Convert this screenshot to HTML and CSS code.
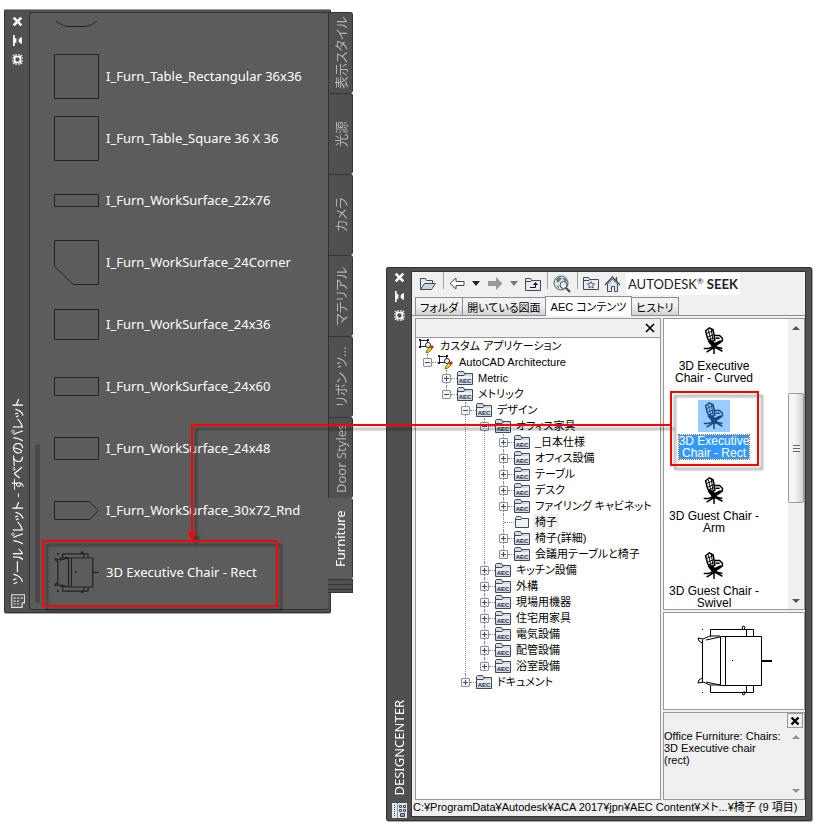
FILE: index.html
```html
<!DOCTYPE html>
<html lang="ja">
<head>
    <meta charset="UTF-8">
    <meta name="viewport" content="width=device-width, initial-scale=1.0">
    <title>DesignCenter</title>
    <link rel="stylesheet" href="styles.css">
</head>
<body>
    <svg class="symbols" aria-hidden="true">
        <symbol id="close" viewBox="0 0 10 10"><path d="M1.5 1.5l7 7M8.5 1.5l-7 7" fill="none" stroke="currentColor" stroke-width="2.4"/></symbol>
        <symbol id="pin" viewBox="0 0 10 10"><path d="M1 0h1.500v3H4v4H2.500v3H1zM9 2v6H8L6 6V4l2-2z" fill="currentColor"/></symbol>
        <symbol id="gear" viewBox="0 0 11 11"><g fill="none" stroke="currentColor"><circle cx="5.500" cy="5.500" r="3" stroke-width="1.600"/><path d="M4 0v3M7 0v3M4 8v3M7 8v3M0 4h3M0 7h3M8 4h3M8 7h3M1 1l2.500 2.500M10 1L7.500 3.500M1 10l2.500-2.500M10 10L7.500 7.500" stroke-width="1.200"/></g></symbol>
        <symbol id="aec" viewBox="0 0 16 14">
            <path d="M.5 13.5V1.5l1-1h5l1 2h8v11z" fill="#d3dae3" stroke="#3f4a59"/>
            <path d="M1 4.5h6l1.500-1.500" fill="none" stroke="#3f4a59"/>
            <path d="M1 5h14v3H1z" fill="#eef1f5"/>
            <text x="8" y="12" text-anchor="middle">AEC</text>
        </symbol>
        <symbol id="folder" viewBox="0 0 16 14">
            <path d="M1.500 12.500v-9l1-2h4l1 2h7v9z" fill="#eef1f5" stroke="#3f4a59"/>
            <path d="M2 4.500h5l1-1" fill="none" stroke="#3f4a59"/>
        </symbol>
        <symbol id="custom" viewBox="0 0 16 16">
            <path d="M1.500 2.500h7v6h-7z" fill="#fff" stroke="#222"/>
            <path d="M0 1h2v2H0zM8 1h2v2H8zM0 8h2v2H0z" fill="#222"/>
            <circle cx="9" cy="7" r="2.500" fill="#fff" stroke="#222"/>
            <path d="M7 15l1-3 3-3 2 2-3 3z" fill="#f0d400" stroke="#554800" stroke-width=".7"/>
            <path d="M11 9l2-2 2 2-2 2z" fill="#d32020"/>
        </symbol>
        <symbol id="chair" viewBox="0 0 24 30">
            <path d="M3 4l4-3 4 2 1 5 1 6-5 3-3-5zM13 9h5l3 3v3l-5 2M14 12h4" fill="none" stroke="currentColor" stroke-width="1.600"/>
            <path d="M6 3l3 13M9 2l2 13M4 7l7-3M5 11l7-3M6 14l7-3" fill="none" stroke="currentColor"/>
            <path d="M5 15l4-1 4 3 6-3 1 3-5 3v3h-5l-1-3z" fill="currentColor"/>
            <path d="M1 23h5l6-2 9 5M13 21l8 2M12 22l-8 5M12 21v8" fill="none" stroke="currentColor" stroke-width="1.600"/>
        </symbol>
        <symbol id="chair-plan" viewBox="0 0 76 72">
            <g fill="none" stroke="currentColor">
                <path d="M14.500 11.500v-7h43v7M50.500 4.500v7M14.500 60.500v7h43v-7M50.500 60.500v7M24.500 11.500h41v49h-41zM29.500 11.500v49M6.500 14.500v43M7 14l7-3h10M10 15l14-3M7 57l7 3h10M10 57l14 3"/>
                <path d="M7 14l-5-1 1 3 3 2M7 57l-5 1 1-3 3-2M46 4l1-3 2 1-1 3M46 67l1 3 2-1-1-3"/>
                <path d="M66 36h10" stroke-width="2"/>
            </g>
            <path d="M6 4h1v1H6zM6 67h1v1H6zM36 35h1v1h-1z" fill="currentColor"/>
        </symbol>
    </svg>

    <div class="workspace">
        <section class="palette" aria-label="ツール パレット">
            <div class="palette-frame">
                <div class="titlebar">
                    <button aria-label="閉じる"><svg><use href="#close"/></svg></button>
                    <button aria-label="自動的に隠す"><svg><use href="#pin"/></svg></button>
                    <button aria-label="プロパティ"><svg><use href="#gear"/></svg></button>
                    <h2>ツール パレット - すべてのパレット</h2>
                    <svg class="title-icon" viewBox="0 0 13 13"><path d="M1.500 1.500h11v7h-2v4h-9z" fill="none" stroke="#ddd"/><path d="M3 4h2v1H3zM6 4h2v1H6zM9 4h2v1H9zM3 6.500h2v1H3zM6 6.500h2v1H6zM3 9h2v1H3zM6 9h2v1H6z" fill="#ddd"/></svg>
                </div>
                <div class="palette-body">
                    <div class="palette-scroll"></div>
                    <ul class="tool-list">
                        <li class="tool-cut"><svg viewBox="0 0 45 32"><path d="M2 8q8 6 13 5.500h15q5 .5 13-5.500"/></svg></li>
                        <li><svg viewBox="0 0 45 45"><path d="M.5.5h44v44H.5z"/></svg>I_Furn_Table_Rectangular 36x36</li>
                        <li><svg viewBox="0 0 45 45"><path d="M.5.5h44v44H.5z"/></svg>I_Furn_Table_Square 36 X 36</li>
                        <li><svg viewBox="0 0 45 45"><path d="M.5 16.500h44v12H.5z"/></svg>I_Furn_WorkSurface_22x76</li>
                        <li><svg viewBox="0 0 45 45"><path d="M.5.5h44v44h-25l-19-18z"/></svg>I_Furn_WorkSurface_24Corner</li>
                        <li><svg viewBox="0 0 45 45"><path d="M.5 7.500h44v30H.5z"/></svg>I_Furn_WorkSurface_24x36</li>
                        <li><svg viewBox="0 0 45 45"><path d="M.5 13.500h44v18H.5z"/></svg>I_Furn_WorkSurface_24x60</li>
                        <li><svg viewBox="0 0 45 45"><path d="M.5 11.500h44v22H.5z"/></svg>I_Furn_WorkSurface_24x48</li>
                        <li><svg viewBox="0 0 45 45"><path d="M.5 13.500h35l9 9-9 9H.5z"/></svg>I_Furn_WorkSurface_30x72_Rnd</li>
                        <li><svg class="plan" viewBox="0 0 45 45"><use href="#chair-plan" width="45" height="45"/></svg>3D Executive Chair - Rect</li>
                    </ul>
                </div>
            </div>
            <nav class="palette-tabs">
                <button>表示スタイル</button>
                <button>光源</button>
                <button>カメラ</button>
                <button>マテリアル</button>
                <button>リボン ツ...</button>
                <button>Door Styles</button>
                <button class="active">Furniture</button>
                <div class="more-tabs"></div>
            </nav>
        </section>

        <section class="design-center" aria-label="DesignCenter">
            <div class="titlebar">
                <button aria-label="閉じる"><svg><use href="#close"/></svg></button>
                <button aria-label="自動的に隠す"><svg><use href="#pin"/></svg></button>
                <button aria-label="プロパティ"><svg><use href="#gear"/></svg></button>
                <h2>DESIGNCENTER</h2>
                <svg class="title-icon" viewBox="0 0 15 15"><path d="M0 0h15v15H0z" fill="#dfe5ec"/><path d="M2.500 2v11" stroke="#3f4a59" stroke-dasharray="1 1"/><path d="M5.500 0v15" stroke="#8b95a3"/><path d="M7.500 2.500h2v2h-2zM11.500 2.500h2v2h-2zM7.500 6.500h2v2h-2zM11.500 6.500h2v2h-2z" fill="none" stroke="#3f4a59"/><path d="M8.500 10.500h4v3h-4z" fill="#8fa0b3" stroke="#3f4a59"/></svg>
            </div>
            <div class="dc-content">
                <div class="toolbar">
                    <button aria-label="ロード"><svg width="18" height="16" viewBox="0 0 18 16"><path d="M1.500 13.500v-11h5l1 2h6v3" fill="#e8ecf0" stroke="#3f4a59"/><path d="M1.500 13.500l4-6h11l-4 6z" fill="#ccd4dd" stroke="#3f4a59"/></svg></button>
                    <span class="separator"></span>
                    <button aria-label="戻る"><svg width="16" height="16" viewBox="0 0 16 16"><path d="M1 7.500l6-5.500v3.500h8v4H7V13z" fill="#fff" stroke="#3f4a59"/></svg></button>
                    <button class="caret" aria-label="戻る履歴"><svg width="8" height="5" viewBox="0 0 8 5"><path d="M0 0h8L4 5z" fill="#222"/></svg></button>
                    <button aria-label="進む"><svg width="16" height="16" viewBox="0 0 16 16"><path d="M15.500 7.500L9 1v4H1v5h8v4z" fill="#999"/></svg></button>
                    <button class="caret" aria-label="進む履歴"><svg width="8" height="5" viewBox="0 0 8 5"><path d="M0 0h8L4 5z" fill="#777"/></svg></button>
                    <button aria-label="上へ"><svg width="16" height="16" viewBox="0 0 16 16"><path d="M.5 14.500v-12h5l1 2h9v10z" fill="#e8ecf0" stroke="#3f4a59"/><path d="M1 5.500h5l1-1" fill="none" stroke="#3f4a59"/><path d="M5 11.500h5.500V8" fill="none" stroke="#111"/><path d="M8 9l2.500-3L13 9z" fill="#111"/></svg></button>
                    <span class="separator"></span>
                    <button aria-label="検索"><svg width="18" height="18" viewBox="0 0 18 18"><circle cx="8" cy="8" r="7" fill="#e6eeee" stroke="#4f5c66"/><path d="M3 4l3-2 3 1-2 3-3 2zM9 3l3 0 2 3-2 1zM3 10l3 1 0 3z" fill="#66807c"/><circle cx="10.500" cy="10" r="3.500" fill="#e9f3fb" stroke="#3f4a59"/><path d="M13 13l4 4" stroke="#3f4a59" stroke-width="2.200"/></svg></button>
                    <span class="separator"></span>
                    <button aria-label="お気に入り"><svg width="16" height="16" viewBox="0 0 16 16"><path d="M.5 13.500v-12h5l1 2h9v10z" fill="#e8ecf0" stroke="#3f4a59"/><path d="M1 4.500h5l1-1" fill="none" stroke="#3f4a59"/><path d="M8 5.500l1 2.200 2.500.2-1.900 1.600.6 2.500L8 10.700 5.800 12l.6-2.500-1.900-1.600 2.500-.2z" fill="#fff" stroke="#3f4a59" stroke-width=".9"/></svg></button>
                    <button aria-label="ホーム"><svg width="17" height="16" viewBox="0 0 17 16"><path d="M3.500 15.500V8l5-5 5 5v7.500h-3v-5h-3v5z" fill="#dfe5ec" stroke="#3f4a59"/><path d="M1 9l7.500-8L16 9M12.500 1v4" fill="none" stroke="#3f4a59" stroke-width="1.300"/></svg></button>
                    <a class="seek" href="#">AUTODESK<sup>®</sup> <b>SEEK</b></a>
                </div>
                <div class="dc-tabs">
                    <button>フォルダ</button>
                    <button>開いている図面</button>
                    <button class="active">AEC コンテンツ</button>
                    <button>ヒストリ</button>
                </div>
                <div class="panes">
                    <div class="tree-pane">
                        <div class="pane-header"><button aria-label="閉じる"><svg width="10" height="10"><path d="M1 1l8 8M9 1L1 9" stroke="#000" stroke-width="1.600"/></svg></button></div>
                        <div class="tree">
                            <div class="node"><svg class="custom"><use href="#custom"/></svg><span>カスタム アプリケーション</span></div>
                            <ul>
                                <li><div class="node"><button class="toggle open" aria-label="閉じる"></button><svg class="custom"><use href="#custom"/></svg><span>AutoCAD Architecture</span></div>
                                    <ul>
                                        <li><div class="node"><button class="toggle" aria-label="開く"></button><svg><use href="#aec"/></svg><span>Metric</span></div></li>
                                        <li><div class="node"><button class="toggle open" aria-label="閉じる"></button><svg><use href="#aec"/></svg><span>メトリック</span></div>
                                            <ul>
                                                <li><div class="node"><button class="toggle open" aria-label="閉じる"></button><svg><use href="#aec"/></svg><span>デザイン</span></div>
                                                    <ul>
                                                        <li><div class="node"><button class="toggle open" aria-label="閉じる"></button><svg><use href="#aec"/></svg><span>オフィス家具</span></div>
                                                            <ul>
                                                                <li><div class="node"><button class="toggle" aria-label="開く"></button><svg><use href="#aec"/></svg><span>_日本仕様</span></div></li>
                                                                <li><div class="node"><button class="toggle" aria-label="開く"></button><svg><use href="#aec"/></svg><span>オフィス設備</span></div></li>
                                                                <li><div class="node"><button class="toggle" aria-label="開く"></button><svg><use href="#aec"/></svg><span>テーブル</span></div></li>
                                                                <li><div class="node"><button class="toggle" aria-label="開く"></button><svg><use href="#aec"/></svg><span>デスク</span></div></li>
                                                                <li><div class="node"><button class="toggle" aria-label="開く"></button><svg><use href="#aec"/></svg><span>ファイリング キャビネット</span></div></li>
                                                                <li><div class="node leaf"><svg><use href="#folder"/></svg><span class="current">椅子</span></div></li>
                                                                <li><div class="node"><button class="toggle" aria-label="開く"></button><svg><use href="#aec"/></svg><span>椅子(詳細)</span></div></li>
                                                                <li><div class="node"><button class="toggle" aria-label="開く"></button><svg><use href="#aec"/></svg><span>会議用テーブルと椅子</span></div></li>
                                                            </ul>
                                                        </li>
                                                        <li><div class="node"><button class="toggle" aria-label="開く"></button><svg><use href="#aec"/></svg><span>キッチン設備</span></div></li>
                                                        <li><div class="node"><button class="toggle" aria-label="開く"></button><svg><use href="#aec"/></svg><span>外構</span></div></li>
                                                        <li><div class="node"><button class="toggle" aria-label="開く"></button><svg><use href="#aec"/></svg><span>現場用機器</span></div></li>
                                                        <li><div class="node"><button class="toggle" aria-label="開く"></button><svg><use href="#aec"/></svg><span>住宅用家具</span></div></li>
                                                        <li><div class="node"><button class="toggle" aria-label="開く"></button><svg><use href="#aec"/></svg><span>電気設備</span></div></li>
                                                        <li><div class="node"><button class="toggle" aria-label="開く"></button><svg><use href="#aec"/></svg><span>配管設備</span></div></li>
                                                        <li><div class="node"><button class="toggle" aria-label="開く"></button><svg><use href="#aec"/></svg><span>浴室設備</span></div></li>
                                                    </ul>
                                                </li>
                                                <li><div class="node"><button class="toggle" aria-label="開く"></button><svg><use href="#aec"/></svg><span>ドキュメント</span></div></li>
                                            </ul>
                                        </li>
                                    </ul>
                                </li>
                            </ul>
                        </div>
                    </div>
                    <div class="side-panes">
                        <div class="content-list">
                            <ul>
                                <li><svg><use href="#chair"/></svg><span>3D Executive<br>Chair - Curved</span></li>
                                <li class="selected"><svg><use href="#chair"/></svg><span>3D Executive<br>Chair - Rect</span></li>
                                <li><svg><use href="#chair"/></svg><span>3D Guest Chair -<br>Arm</span></li>
                                <li><svg><use href="#chair"/></svg><span>3D Guest Chair -<br>Swivel</span></li>
                            </ul>
                            <div class="scrollbar">
                                <button class="up" aria-label="上へスクロール"></button>
                                <div class="thumb"></div>
                                <button class="down" aria-label="下へスクロール"></button>
                            </div>
                        </div>
                        <div class="preview"><svg width="76" height="72"><use href="#chair-plan"/></svg></div>
                        <div class="description">
                            <button class="close-description" aria-label="閉じる"><svg width="10" height="10"><use href="#close"/></svg></button>
                            <div class="description-body">
                                <p>Office Furniture: Chairs:<br>3D Executive chair<br>(rect)</p>
                                <div class="scrollbar">
                                    <button class="up" aria-label="上へスクロール"></button>
                                    <button class="down" aria-label="下へスクロール"></button>
                                </div>
                            </div>
                        </div>
                    </div>
                </div>
                <div class="status">C:¥ProgramData¥Autodesk¥ACA 2017¥jpn¥AEC Content¥メト...¥椅子 (9 項目)</div>
            </div>
        </section>

        <!-- drag path from the content list to the palette -->
        <svg class="callout" width="823" height="833" viewBox="0 0 823 833" aria-hidden="true">
            <path d="M43 541h234v65H43zM671 392h87v73h-87zM670 425H192v110"/>
            <path class="arrow-head" d="M187 531l5 2 5-2-5 10z"/>
        </svg>
    </div>
</body>
</html>
```

FILE: styles.css
```css
body {
    margin: 0;
    background-color: #fff;
    color: #000;
    font-family: "Liberation Sans", "Noto Sans CJK JP", sans-serif;
    font-size: 12px;
    font-feature-settings: "palt";
}

ul {
    list-style: none;
    margin: 0;
    padding: 0;
}

button {
    display: flex;
    align-items: center;
    justify-content: center;
    margin: 0;
    padding: 0;
    border: none;
    background: none;
    color: inherit;
    font: inherit;
    font-feature-settings: inherit;
}

.symbols {
    display: none;
}

#aec text {
    font: bold 6px "Liberation Sans", sans-serif;
    fill: #2c3644;
}

.workspace {
    position: relative;
    display: grid;
    grid-template-columns: minmax(0, 349fr) minmax(0, 426fr);
    gap: 33px;
    align-items: start;
    padding: 9px 11px 11px 4px;
}

/* Shared vertical title bar */
.titlebar {
    display: flex;
    flex-direction: column;
    align-items: center;
    gap: 8px;
    flex: none;
    width: 24px;
    box-sizing: border-box;
    padding: 4px 0 2px;
    color: #fff;
}

.titlebar button svg {
    width: 11px;
    height: 11px;
}

.titlebar h2 {
    margin: auto 0 0;
    font-family: "Noto Sans", "Noto Sans CJK JP", sans-serif;
    font-size: 13px;
    font-weight: normal;
    line-height: 16px;
    white-space: nowrap;
    writing-mode: vertical-rl;
    text-orientation: sideways;
    transform: rotate(180deg);
}

.title-icon {
    width: 15px;
    height: 15px;
}

/* Tool palette */
.palette {
    display: flex;
    align-items: flex-start;
    font-family: "Noto Sans", "Noto Sans CJK JP", sans-serif;
    color: #fff;
}

.palette-frame {
    display: flex;
    flex: 1;
    min-width: 0;
    box-sizing: border-box;
    padding: 2px 2px 2px 0;
    background-color: #505050;
    border: 1px solid #333;
    border-top-color: #999;
    border-radius: 2px;
    box-shadow: 0 1px 0 #aaa;
}

.palette-body {
    display: flex;
    flex: 1;
    align-items: flex-end;
    min-width: 0;
    box-sizing: border-box;
    padding: 0 0 6px 5px;
    background-color: #5c5c5c;
    border: 1px solid #333;
    border-right: none;
    border-radius: 3px;
}

.palette-scroll {
    width: 5px;
    height: 159px;
    background-color: #484848;
    border-radius: 3px;
}

.tool-list {
    flex: 1;
    padding-left: 14px;
}

.tool-list li {
    display: flex;
    align-items: center;
    gap: 7px;
    height: 62px;
    font-size: 13px;
    white-space: nowrap;
}

.tool-list .tool-cut {
    height: 32px;
}

.tool-list svg {
    flex: none;
    width: 45px;
    color: #222;
    fill: none;
    stroke: #222;
}

.tool-list .plan {
    stroke-width: 2;
}

.palette-tabs {
    flex: none;
    width: 25px;
    margin: 3px 0 0 -3px;
}

.palette-tabs button {
    width: 25px;
    height: 81px;
    background-color: #505050;
    border: 1px solid #333;
    border-top-width: 0;
    border-radius: 3px 0 0 3px;
    color: #b4b4b4;
    font-size: 13px;
    line-height: 20px;
    white-space: nowrap;
    writing-mode: vertical-rl;
    text-orientation: sideways;
    transform: rotate(180deg);
}

.palette-tabs .active {
    background-color: #5c5c5c;
    border-width: 0 0 0 1px;
    color: #fff;
}

.more-tabs {
    height: 14px;
    background: repeating-linear-gradient(#333 0 1px, #505050 1px 5px);
    border-right: 1px solid #333;
    border-bottom: 1px solid #333;
    box-sizing: border-box;
}

/* DesignCenter window */
.design-center {
    display: flex;
    margin-top: 258px;
    box-sizing: border-box;
    background-color: #505050;
    border: 1px solid #333;
    border-radius: 2px;
    box-shadow: 1px 1px 0 #aaa;
}

.dc-content {
    flex: 1;
    min-width: 0;
    margin: 3px 5px 3px 0;
    background-color: #f0f0f0;
    border: 1px solid #333;
}

.toolbar {
    display: flex;
    align-items: center;
    gap: 5px;
    height: 23px;
    padding-left: 7px;
}

.toolbar button {
    height: 20px;
}

.separator {
    width: 1px;
    height: 17px;
    margin: 0 0 6px 1px;
    background-color: #a0a0a0;
}

.toolbar .caret {
    width: 12px;
}

.seek {
    padding: 0 2px;
    background-color: #fff;
    color: #222;
    font-family: Lato, sans-serif;
    font-size: 13px;
    line-height: 22px;
    text-decoration: none;
    white-space: nowrap;
}

.seek sup {
    font-size: 8px;
    line-height: 0;
}

.dc-tabs {
    display: flex;
    align-items: flex-end;
    height: 20px;
    padding-left: 3px;
    border-bottom: 1px solid #8c8c94;
}

.dc-tabs button {
    height: 18px;
    padding: 0 4px;
    background: linear-gradient(#f2f2f2 45%, #d2d2d2);
    border: 1px solid #8c8c94;
    border-bottom: none;
    font-size: 11px;
    white-space: nowrap;
}

.dc-tabs button + button {
    margin-left: -1px;
}

.dc-tabs .active {
    height: 20px;
    margin-bottom: -1px;
    padding: 0 5px 1px;
    background: #fff;
}

.panes {
    display: grid;
    grid-template-columns: minmax(0, 1fr) 142px;
    gap: 2px;
    padding: 2px 0 0 3px;
}

.tree-pane {
    background-color: #fff;
    border: 1px solid #999;
}

.pane-header {
    display: flex;
    justify-content: flex-end;
    height: 18px;
    padding-right: 5px;
    background-color: #f0f0f0;
    border-bottom: 1px solid #999;
}

.tree {
    padding-left: 3px;
    font-size: 11px;
}

.tree > ul {
    padding-left: 4px;
}

.tree ul ul {
    padding-left: 19px;
}

.tree li {
    position: relative;
}

.tree li::before {
    content: "";
    position: absolute;
    top: 0;
    bottom: 0;
    left: 4px;
    border-left: 1px dotted #888;
}

.tree li:last-child::before {
    bottom: auto;
    height: 8px;
}

.node {
    display: flex;
    align-items: center;
    height: 16px;
    line-height: 16px;
    white-space: nowrap;
}

.node svg {
    flex: none;
    width: 16px;
    height: 14px;
}

.node .custom {
    height: 16px;
}

.node span {
    margin-left: 3px;
    padding: 0 2px;
}

.node .current {
    background-color: #f0f0f0;
}

.toggle {
    position: relative;
    flex: none;
    width: 9px;
    height: 9px;
    margin-right: 6px;
    background:
        linear-gradient(#2a50a8, #2a50a8) center / 5px 1px no-repeat,
        linear-gradient(#2a50a8, #2a50a8) center / 1px 5px no-repeat,
        #f4f4f4;
    border: 1px solid #919191;
    border-radius: 1px;
}

.toggle.open {
    background:
        linear-gradient(#2a50a8, #2a50a8) center / 5px 1px no-repeat,
        #f4f4f4;
}

.toggle::after {
    content: "";
    position: absolute;
    top: 3px;
    left: 8px;
    width: 6px;
    border-top: 1px dotted #888;
}

.leaf::before {
    content: "";
    width: 10px;
    margin-left: 5px;
    border-top: 1px dotted #888;
}

.side-panes {
    display: flex;
    flex-direction: column;
    gap: 2px;
}

.content-list {
    display: flex;
    justify-content: space-between;
    background-color: #fff;
    border: 1px solid #999;
}

.content-list ul {
    display: flex;
    flex-direction: column;
    gap: 16px;
    width: 100px;
    padding-top: 6px;
}

.content-list li {
    display: flex;
    flex-direction: column;
    align-items: center;
    gap: 3px;
    line-height: 12px;
    text-align: center;
    white-space: nowrap;
}

.content-list li svg {
    box-sizing: border-box;
    width: 32px;
    height: 32px;
    padding: 2px;
}

.content-list .selected svg {
    background-color: #99ccff;
    color: #174a80;
}

.selected span {
    background-color: #3399ff;
    color: #fff;
    outline: 1px dotted #c87020;
}

.scrollbar {
    display: flex;
    flex-direction: column;
    flex: none;
    width: 16px;
    background-color: #f0f0f0;
}

.scrollbar button {
    height: 17px;
}

.scrollbar button::before {
    content: "";
    border: 4px solid transparent;
}

.scrollbar .up::before {
    border-top: none;
    border-bottom-color: #555;
}

.scrollbar .down {
    margin-top: auto;
}

.scrollbar .down::before {
    border-bottom: none;
    border-top-color: #555;
}

.thumb {
    height: 110px;
    margin-top: 57px;
    box-sizing: border-box;
    background:
        repeating-linear-gradient(#666 0 1px, #f0f0f0 1px 3px) center / 7px 7px no-repeat,
        linear-gradient(90deg, #f6f6f6 40%, #d0d0d4);
    border: 1px solid #999;
    border-radius: 2px;
}

.preview {
    display: flex;
    align-items: center;
    justify-content: center;
    height: 96px;
    background-color: #fff;
    border: 1px solid #999;
}

.description {
    display: flex;
    flex-direction: column;
    height: 86px;
    border: 1px solid #999;
}

.description .scrollbar button {
    opacity: 0.6;
}

.close-description {
    align-self: flex-end;
    width: 16px;
    height: 15px;
    margin-right: 1px;
    box-sizing: border-box;
    border: 1px solid #999;
}

.description-body {
    display: flex;
    flex: 1;
}

.description p {
    flex: 1;
    margin: 2px 0 0;
    font-size: 11px;
    line-height: 12px;
}

.status {
    height: 16px;
    padding-left: 1px;
    font-size: 11px;
    line-height: 15px;
    white-space: nowrap;
    overflow: hidden;
}

.callout {
    position: absolute;
    top: 0;
    left: 0;
    pointer-events: none;
    fill: none;
    stroke: #f00;
    stroke-width: 2;
    filter: drop-shadow(4px 4px 1px rgba(0, 0, 0, 0.35));
}

.arrow-head {
    fill: #f00;
    stroke: none;
}
```
